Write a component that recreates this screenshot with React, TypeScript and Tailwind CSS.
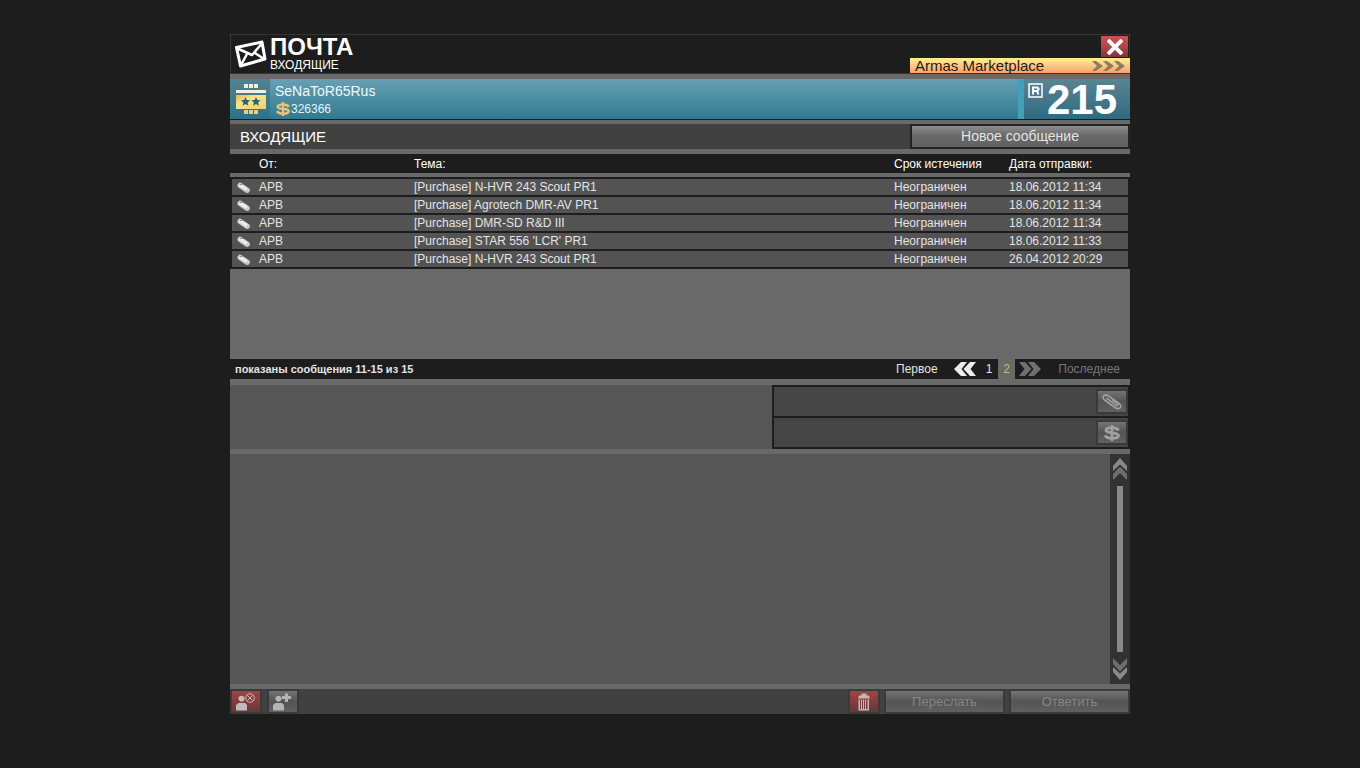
const messages = [
  { id: 1, from: 'APB', subject: '[Purchase] N-HVR 243 Scout PR1', expires: 'Неограничен', sent: '18.06.2012 11:34' },
  { id: 2, from: 'APB', subject: '[Purchase] Agrotech DMR-AV PR1', expires: 'Неограничен', sent: '18.06.2012 11:34' },
  { id: 3, from: 'APB', subject: '[Purchase] DMR-SD R&D III', expires: 'Неограничен', sent: '18.06.2012 11:34' },
  { id: 4, from: 'APB', subject: "[Purchase] STAR 556 'LCR' PR1", expires: 'Неограничен', sent: '18.06.2012 11:33' },
  { id: 5, from: 'APB', subject: '[Purchase] N-HVR 243 Scout PR1', expires: 'Неограничен', sent: '26.04.2012 20:29' },
];

const grayButton = 'bg-linear-to-b from-[#8c8c8c] from-0% via-[#686868] via-50% to-[#626262]';
const dimButton = 'bg-linear-to-b from-[#747474] via-[#545454] via-50% to-[#606060] text-[#868686]';
const redButton = 'bg-linear-to-b from-[#a04547] via-[#853c3e] to-[#633a3b] text-[#c4b8b8]';
const iconButton = 'flex h-[21px] w-7 items-center justify-center outline-2 outline-[#3a3a3a]';

function MailIcon() {
  return (
    <svg viewBox="0 0 32 28" className="h-7 w-8" fill="none" stroke="#fff" strokeWidth="3" strokeLinejoin="round" aria-hidden="true">
      <path d="M1.500 7.500 27 2 30 19 5.500 26Z" />
      <path d="M2.500 8.500 17 15 27 3.500M6 25 12 14M29 19 20 13" strokeWidth="2.500" />
    </svg>
  );
}

function TicketBadge() {
  return (
    <svg viewBox="0 0 30 30" className="size-[30px]" aria-hidden="true">
      <defs>
        <linearGradient id="gold" x1="0" y1="0" x2="1" y2="1">
          <stop offset="0" stopColor="#d9b95a" />
          <stop offset="0.35" stopColor="#f6e48c" />
          <stop offset="1" stopColor="#ecd070" />
        </linearGradient>
      </defs>
      <path fill="#f4f0d8" d="M8 0h4v4H8zM13 0h4v4h-4zM18 0h4v4h-4zM0 6h30v3H0z" />
      <path fill="url(#gold)" d="M0 11h30v14H0z" />
      <path fill="#e3cf8a" d="M8 26h4v4H8zM13 26h4v4h-4zM18 26h4v4h-4z" />
      <path
        fill="#2c6470"
        d="m9.500 13 1.300 3.100 3.300.2-2.500 2.200.8 3.300-2.900-1.800-2.900 1.800.8-3.300-2.500-2.200 3.300-.2ZM20 13l1.300 3.100 3.300.2-2.500 2.200.8 3.300-2.900-1.800-2.900 1.800.8-3.300-2.500-2.200 3.300-.2Z"
      />
    </svg>
  );
}

function DollarIcon({ className }: { className: string }) {
  return (
    <svg viewBox="0 0 18 16" className={className} fill="none" stroke="currentColor" aria-hidden="true">
      <path d="M15.500 5.500C14.500 3.500 12 2.800 9 2.800 5 2.800 3 3.500 3 5.300 3 9 15.500 6.800 15.500 10.600c0 2-3 2.700-6.500 2.700S3 12.500 2.200 10.300" strokeWidth="3" />
      <path d="M9 0v16" strokeWidth="2.500" />
    </svg>
  );
}

function RowClip() {
  return (
    <svg viewBox="0 0 14 12" className="ml-[5px] block h-3 w-3.5" aria-label="Вложение" role="img">
      <path d="M3.200 3.500 10.200 8.200" stroke="#c8c8c8" strokeWidth="5.500" strokeLinecap="round" />
      <path d="M3 3.200 9 7" stroke="#eeeeee" strokeWidth="3" strokeLinecap="round" />
      <path d="M3 2.500h2" stroke="#8c8c8c" strokeWidth="1" strokeLinecap="round" />
    </svg>
  );
}

function ClipIcon() {
  return (
    <svg viewBox="0 0 20 16" className="h-4 w-5" fill="none" stroke="#a0a0a0" strokeWidth="1.600" strokeLinecap="round" aria-hidden="true">
      <path d="M13.500 7 6.500 1.800C4.500.6 2 1 1.200 2.500.7 3.800 1.300 5 2.500 6l10.500 7.500c2 1.500 4.500 1.400 5.500 0 .8-1.500 0-3-1.500-4.200L10.500 5" />
      <path d="M5 4.500 14 11.300c1 .6 2 .3 2-.6 0-.7-.4-1-1-1.500L11 6.500" />
    </svg>
  );
}

// points left by default
function DoubleChevron({ className }: { className: string }) {
  return (
    <svg viewBox="0 0 22 14" className={className} fill="currentColor" aria-hidden="true">
      <path d="M7 0h6L7.500 7l5.500 7H7L0 7ZM16 0h6l-5.500 7 5.500 7h-6L9.500 7Z" />
    </svg>
  );
}

function ScrollChevrons({ className }: { className: string }) {
  return (
    <svg viewBox="0 0 14 22" className={className} aria-hidden="true">
      <path fill="#898989" d="m7 0 7 8v5L7 6.500 0 13V8Z" />
      <path fill="#6e6e6e" d="m7 8.500 7 7.500v6l-7-7-7 7v-6Z" />
    </svg>
  );
}

function Person({ blocked = false }: { blocked?: boolean }) {
  return (
    <svg viewBox="0 0 20 18" className="h-[18px] w-5" fill="currentColor" aria-hidden="true">
      <path d="M4 3h3l1.500 1.500v2L7 8.500H4L2.500 6.500v-2ZM2.500 10h6.500l2 2v5.500H0V12Z" />
      {blocked ? (
        <g fill="none" stroke="currentColor">
          <circle cx="14" cy="5" r="4.300" />
          <path d="m11.500 2.500 5 5m0-5-5 5" />
        </g>
      ) : (
        <path d="M12 .5h3V3h3v3h-3v3h-3V6H9V3h3Z" />
      )}
    </svg>
  );
}

function TrashIcon() {
  return (
    <svg viewBox="0 0 12 18" className="h-[18px] w-3" fill="currentColor" aria-hidden="true">
      <path d="M3.500.5h5v2H11l1 3H0l1-3h2.500Z" />
      <path d="M.5 6.500h1.500v10H.5ZM3 6.500h1v10H3ZM5 6.500h1v10H5ZM7 6.500h1v10H7ZM9.500 6.500H11v10H9.500ZM.5 16H11v1.500H.5Z" />
    </svg>
  );
}

export default function App() {
  return (
    <div className="min-h-screen bg-[#1d1d1d] py-[34px] font-['Liberation_Sans',Arial,sans-serif] text-xs text-[#e4e4e4]">
      <main className="mx-auto w-full max-w-[900px] bg-[#696969]">
        <header className="flex h-10 justify-between border border-[#363636] bg-[#1d1d1d] text-white">
          <div className="flex items-center pl-1">
            <MailIcon />
            <div className="pt-0.5 pl-[3px]">
              <h1 className="text-2xl leading-6 font-bold">ПОЧТА</h1>
              <h2 className="pb-1 leading-3">ВХОДЯЩИЕ</h2>
            </div>
          </div>
          <div className="-mr-px flex w-[220px] flex-col items-end justify-between">
            <button
              type="button"
              aria-label="Закрыть"
              className="mt-px mr-0.5 flex h-[21px] w-[27px] items-center justify-center bg-linear-to-b from-[#d25052] via-[#b34446] via-50% to-[#7d3538]"
            >
              <svg viewBox="0 0 16 16" className="size-4" stroke="#fff" strokeWidth="4" aria-hidden="true">
                <path d="m1 1 14 14M15 1 1 15" />
              </svg>
            </button>
            <a
              href="#marketplace"
              className="flex h-[15px] w-full items-center justify-between bg-linear-to-b from-[#fff08c] via-[#ffc987] to-[#ff9e66] pr-1 pl-[5px] text-[15px] leading-4 text-[#241a12]"
            >
              Armas Marketplace
              <svg viewBox="0 0 34 10" className="h-2.5 w-[34px]" fill="#8a7b63" aria-hidden="true">
                <path d="M0 0h4l7 5-7 5H0l5-5ZM11 0h4l7 5-7 5h-4l5-5ZM22 0h4l7 5-7 5h-4l5-5Z" />
              </svg>
            </a>
          </div>
        </header>

        <section className="mt-[5px] flex h-[41px] border-b border-[#1d1d1d] bg-linear-to-b from-[#68a0b4] via-[#4b8da3] to-[#2f7a91] text-white">
          <div className="flex w-10 items-center justify-center bg-linear-to-b from-[#53818f] to-[#2b7387] pl-0.5">
            <TicketBadge />
          </div>
          <div className="flex-1 pl-[5px]">
            <p className="pt-1 text-sm leading-4 text-[#f2f8fa]">SeNaToR65Rus</p>
            <p className="flex items-center leading-5 text-[#e8f2f5]">
              <DollarIcon className="h-3.5 w-4 text-[#e6c27a]" />
              326366
            </p>
          </div>
          <div className="flex w-28 border-l-[6px] border-[#43a0ba] bg-linear-to-b from-[#5a8492] to-[#2d6b80] pl-1">
            <svg viewBox="0 0 15 15" className="mt-1 size-[15px]" fill="none" stroke="#fff" aria-hidden="true">
              <path d="M1 1h13v13H1Z" strokeWidth="1.500" />
              <path d="M5 11.500V4.500h4.500L10.500 5.500v1L9.500 8H6m3 0 1.500 3.500" strokeWidth="2" />
            </svg>
            <span className="pl-1 text-[42px] leading-[42px] font-bold">215</span>
          </div>
        </section>

        <div className="mt-1 flex h-[25px] bg-[#414141]">
          <h2 className="flex-1 pl-2.5 text-[15px] leading-[25px] text-white">ВХОДЯЩИЕ</h2>
          <div className="w-[220px] bg-[#232323] p-0.5">
            <button type="button" className={`block h-[21px] w-full text-sm leading-[21px] ${grayButton}`}>
              Новое сообщение
            </button>
          </div>
        </div>

        <div className="mt-[5px] min-h-[205px]">
          <table className="w-full table-fixed border-separate border-spacing-0 text-left leading-4">
            <colgroup>
              <col className="w-[29px]" />
              <col className="w-[155px]" />
              <col />
              <col className="w-[115px]" />
              <col className="w-[121px]" />
            </colgroup>
            <thead>
              <tr className="h-[23px] bg-[#1d1d1d] text-white *:border-b-4 *:border-[#696969] *:p-0 *:font-normal">
                <td />
                <th scope="col">От:</th>
                <th scope="col">Тема:</th>
                <th scope="col">Срок истечения</th>
                <th scope="col">Дата отправки:</th>
              </tr>
            </thead>
            <tbody className="leading-[15px]">
              {messages.map((m) => (
                <tr
                  key={m.id}
                  className="bg-[#535353] *:border-b-2 *:border-[#1d1d1d] *:p-0 *:pt-px *:first:border-l-2 *:last:border-r-2 first:*:border-t-2"
                >
                  <td><RowClip /></td>
                  <td>{m.from}</td>
                  <td className="truncate">{m.subject}</td>
                  <td>{m.expires}</td>
                  <td>{m.sent}</td>
                </tr>
              ))}
            </tbody>
          </table>
        </div>

        <nav className="flex h-5 items-center justify-between bg-[#1d1d1d] pr-2.5 pl-[5px]">
          <p className="text-[11px] font-bold">показаны сообщения 11-15 из 15</p>
          <div className="flex h-5 items-center text-xs">
            <button type="button" className="w-[58px] text-left">Первое</button>
            <button type="button" aria-label="Назад"><DoubleChevron className="h-3.5 w-[22px] text-[#ececec]" /></button>
            <button type="button" className="w-[22px] pl-1">1</button>
            <button type="button" aria-current="page" className="h-5 w-[17px] bg-[#696969] text-[#dcb468]">2</button>
            <button type="button" aria-label="Вперёд" disabled className="ml-1"><DoubleChevron className="h-3.5 w-[22px] rotate-180 text-[#707070]" /></button>
            <button type="button" disabled className="w-[79px] text-right text-[#777]">Последнее</button>
          </div>
        </nav>

        <section className="mt-1.5 flex h-16 bg-[#565656]">
          <div className="flex-1" />
          <div className="flex w-[358px] flex-col gap-0.5 bg-[#1d1d1d] p-0.5">
            <div className="flex flex-1 items-center justify-end bg-[#454545] pr-0.5">
              <button type="button" aria-label="Вложение" disabled className={`${iconButton} ${dimButton}`}>
                <ClipIcon />
              </button>
            </div>
            <div className="flex flex-1 items-center justify-end bg-[#454545] pr-0.5">
              <button type="button" aria-label="Деньги" disabled className={`${iconButton} ${dimButton}`}>
                <DollarIcon className="h-4 w-[18px] text-[#a0a0a0]" />
              </button>
            </div>
          </div>
        </section>

        <section className="mt-[5px] flex h-[230px] bg-[#565656]">
          <div className="flex-1" />
          <div className="flex w-5 flex-col items-center bg-[#323232] py-1">
            <button type="button" aria-label="Вверх"><ScrollChevrons className="h-[22px] w-3.5" /></button>
            <div className="my-1.5 w-1.5 flex-1 bg-[#898989]" />
            <button type="button" aria-label="Вниз"><ScrollChevrons className="h-[22px] w-3.5 rotate-180" /></button>
          </div>
        </section>

        <footer className="mt-[5px] flex h-[25px] items-center bg-[#414141] px-0.5 text-[13px]">
          <button type="button" aria-label="Заблокировать" className={`${iconButton} ${redButton}`}>
            <Person blocked />
          </button>
          <button type="button" aria-label="Добавить друга" className={`ml-[9px] ${iconButton} ${dimButton}`}>
            <span className="text-[#b4b4b4]"><Person /></span>
          </button>
          <div className="ml-auto flex gap-2">
            <button type="button" aria-label="Удалить" className={`${iconButton} ${redButton}`}>
              <TrashIcon />
            </button>
            <button type="button" disabled className={`h-[21px] w-[117px] outline-2 outline-[#3a3a3a] ${dimButton}`}>Переслать</button>
            <button type="button" disabled className={`h-[21px] w-[117px] outline-2 outline-[#3a3a3a] ${dimButton}`}>Ответить</button>
          </div>
        </footer>
      </main>
    </div>
  );
}
